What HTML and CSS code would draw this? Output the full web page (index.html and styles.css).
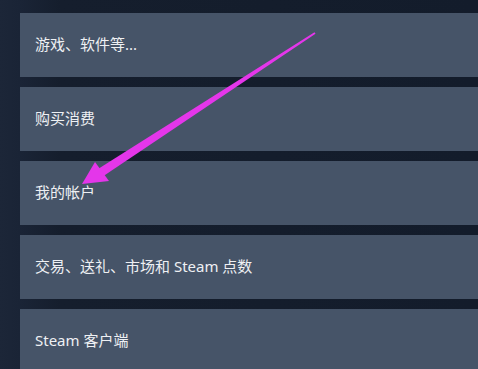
FILE: index.html
```html
<!DOCTYPE html>
<html lang="zh-CN">
<head>
<meta charset="utf-8">
<link rel="stylesheet" href="styles.css">
</head>
<body>
<div class="page">
  <div class="list">
    <div class="item">游戏、软件等...</div>
    <div class="item">购买消费</div>
    <div class="item">我的帐户</div>
    <div class="item">交易、送礼、市场和 Steam 点数</div>
    <div class="item">Steam 客户端</div>
  </div>
  <svg class="arrow" width="478" height="369" viewBox="0 0 478 369">
    <polygon points="102.4,176.8 97.6,169.2 314.5,32.2 315.5,33.8" fill="#e436ea"/>
    <polygon points="82,184 95,162 109,181" fill="#e436ea"/>
  </svg>
</div>
</body>
</html>
```
FILE: styles.css
```css
html, body {
  margin: 0;
  padding: 0;
  width: 478px;
  height: 369px;
  overflow: hidden;
}
body {
  background: linear-gradient(90deg, #1c2638 0px, #1a2436 20px, #151e2d 60px, #131c2b 100%);
  font-family: "Noto Sans", "Noto Sans CJK SC", sans-serif;
}
.page {
  position: relative;
  width: 478px;
  height: 369px;
}
.list {
  display: flex;
  flex-direction: column;
  gap: 10px;
  padding: 13px 0 0 20px;
}
.item {
  box-sizing: border-box;
  width: 470px;
  height: 64px;
  background: #465468;
  color: #eef0f3;
  font-size: 15px;
  display: flex;
  align-items: center;
  padding: 0 0 3px 15px;
  flex-shrink: 0;
}
.arrow {
  position: absolute;
  left: 0;
  top: 0;
  pointer-events: none;
}
```
